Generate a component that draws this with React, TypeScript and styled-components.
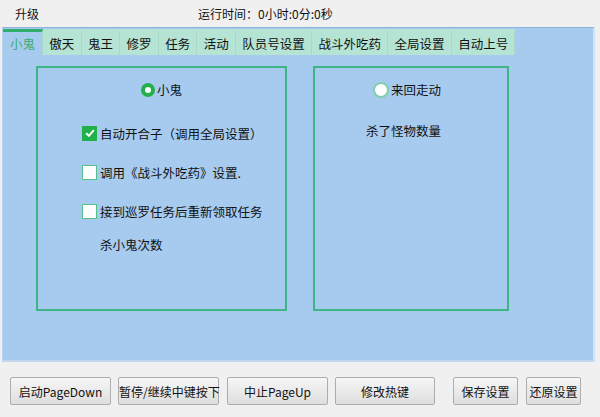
import React from 'react';
import styled, { createGlobalStyle } from 'styled-components';

const GlobalStyle = createGlobalStyle`
  html, body {
    margin: 0;
    padding: 0;
    background: #f0f0f0;
  }
  body {
    font-family: "Noto Sans CJK SC", "Liberation Sans", sans-serif;
    font-size: 12px;
    color: #111;
  }
`;

const tabs = ['小鬼', '傲天', '鬼王', '修罗', '任务', '活动', '队员号设置', '战斗外吃药', '全局设置', '自动上号'];

const buttons = [
  { label: '启动PageDown', width: 101, gap: 7 },
  { label: '暂停/继续中键按下', width: 101, gap: 8 },
  { label: '中止PageUp', width: 101, gap: 7 },
  { label: '修改热键', width: 100, gap: 18 },
  { label: '保存设置', width: 65, gap: 8 },
  { label: '还原设置', width: 55, gap: 0 },
];

const App: React.FC = () => {
  return (
    <Window>
      <GlobalStyle />
      <TopBar>
        <Title>升级</Title>
        <RunTime>运行时间：0小时:0分:0秒</RunTime>
      </TopBar>

      <MainPanel>
        <TabStrip>
          {tabs.map((t, i) => (
            <Tab key={t} active={i === 0}>
              {t}
            </Tab>
          ))}
        </TabStrip>

        <Content>
          <GroupBox width={251}>
            <RadioRow>
              <Radio checked />
              <span>小鬼</span>
            </RadioRow>
            <CheckList>
              <CheckRow>
                <CheckBox checked>
                  <svg width="12" height="12" viewBox="0 0 12 12">
                    <path d="M2.2 6.2 L4.9 8.8 L9.8 3.2" fill="none" stroke="#fff" strokeWidth="2" />
                  </svg>
                </CheckBox>
                <span>自动开合子（调用全局设置）</span>
              </CheckRow>
              <CheckRow>
                <CheckBox />
                <span>调用《战斗外吃药》设置.</span>
              </CheckRow>
              <CheckRow>
                <CheckBox />
                <span>接到巡罗任务后重新领取任务</span>
              </CheckRow>
              <PlainLabel>杀小鬼次数</PlainLabel>
            </CheckList>
          </GroupBox>

          <GroupBox width={196}>
            <RadioRow shift={8}>
              <Radio />
              <span>来回走动</span>
            </RadioRow>
            <KillLabel>杀了怪物数量</KillLabel>
          </GroupBox>
        </Content>
      </MainPanel>

      <ButtonBar>
        {buttons.map((b) => (
          <ActionButton key={b.label} width={b.width} gap={b.gap}>
            {b.label}
          </ActionButton>
        ))}
      </ButtonBar>
    </Window>
  );
};

const Window = styled.div`
  width: 600px;
  height: 417px;
  display: flex;
  flex-direction: column;
  background: #f0f0f0;
  overflow: hidden;
`;

const TopBar = styled.div`
  height: 27px;
  display: flex;
  align-items: center;
  padding-left: 15px;
  box-sizing: border-box;
`;

const Title = styled.span`
  font-size: 12px;
`;

const RunTime = styled.span`
  margin-left: 159px;
  font-size: 12px;
`;

const MainPanel = styled.div`
  height: 335px;
  margin: 0 5px 0 2px;
  background: #a7cbef;
  border-top: 1px solid #8fb4dc;
  border-right: 2px solid #d2e3f3;
  border-bottom: 2px solid #c3d8ee;
  border-left: 1px solid #b8d4f0;
  box-sizing: border-box;
`;

const TabStrip = styled.div`
  display: flex;
  height: 26px;
  margin: 1px 0 0 0;
`;

const Tab = styled.div<{ active?: boolean }>`
  display: flex;
  align-items: center;
  justify-content: center;
  padding: 0 6.3px;
  font-size: 12.5px;
  white-space: nowrap;
  box-sizing: border-box;
  background: ${(p) => (p.active ? '#a7cbef' : '#b5e3d4')};
  color: ${(p) => (p.active ? '#3aae74' : '#111')};
  border-top: 3px solid ${(p) => (p.active ? '#2fae6c' : '#b5e3d4')};
  border-right: 1px solid #a9d8c8;
  &:first-child {
    width: 40px;
    padding: 0;
  }
`;

const Content = styled.div`
  display: flex;
  gap: 26px;
  padding: 11px 0 0 33px;
`;

const GroupBox = styled.div<{ width: number }>`
  width: ${(p) => p.width}px;
  height: 245px;
  border: 2px solid #3fb585;
  box-sizing: border-box;
  display: flex;
  flex-direction: column;
`;

const RadioRow = styled.div<{ shift?: number }>`
  display: flex;
  align-items: center;
  justify-content: center;
  gap: 2px;
  margin-top: 12px;
  padding-right: ${(p) => p.shift || 0}px;
  font-size: 12.5px;
`;

const Radio = styled.span<{ checked?: boolean }>`
  width: ${(p) => (p.checked ? 14 : 16)}px;
  height: ${(p) => (p.checked ? 14 : 16)}px;
  border-radius: 50%;
  box-sizing: border-box;
  background: #fff;
  border: ${(p) => (p.checked ? '4px solid #22b04b' : '2px solid #7fd1a8')};
`;

const CheckList = styled.div`
  display: flex;
  flex-direction: column;
  padding: 27px 0 0 44px;
  gap: 25px;
`;

const CheckRow = styled.div`
  display: flex;
  align-items: center;
  gap: 3px;
  font-size: 12.5px;
  height: 14px;
`;

const CheckBox = styled.span<{ checked?: boolean }>`
  width: 15px;
  height: 15px;
  box-sizing: border-box;
  display: flex;
  align-items: center;
  justify-content: center;
  background: ${(p) => (p.checked ? '#22b04b' : '#fff')};
  border: 1px solid ${(p) => (p.checked ? '#22b04b' : '#55c08a')};
`;

const PlainLabel = styled.div`
  padding-left: 18px;
  margin-top: -8px;
  font-size: 12.5px;
`;

const KillLabel = styled.div`
  padding-left: 51px;
  margin-top: 22px;
  font-size: 12.5px;
`;

const ButtonBar = styled.div`
  display: flex;
  padding: 15px 0 0 10px;
`;

const ActionButton = styled.button<{ width: number; gap: number }>`
  width: ${(p) => p.width}px;
  height: 28px;
  margin-right: ${(p) => p.gap}px;
  padding: 0;
  border: 1px solid #adadad;
  border-radius: 2px;
  background: linear-gradient(#f6f6f6, #dedede);
  font-family: "Noto Sans CJK SC", "Liberation Sans", sans-serif;
  font-size: 12px;
  color: #111;
  white-space: nowrap;
`;

export default App;
